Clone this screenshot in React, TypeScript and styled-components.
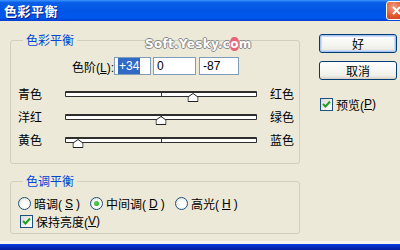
import styled, { createGlobalStyle } from "styled-components";

const GlobalStyle = createGlobalStyle`
  html, body {
    margin: 0;
    padding: 0;
  }
  body {
    width: 400px;
    height: 250px;
    overflow: hidden;
    background: #ece9d8;
    font-family: "Liberation Sans", "Noto Sans CJK SC", sans-serif;
    font-size: 12px;
    color: #000;
  }
`;

const Window = styled.div`
  position: relative;
  display: flex;
  flex-direction: column;
  width: 400px;
  height: 250px;
  background: #ece9d8;
`;

const TitleBar = styled.div`
  height: 21px;
  display: flex;
  align-items: center;
  justify-content: space-between;
  padding-left: 4px;
  overflow: hidden;
  background: linear-gradient(
    #3d95ff 0%,
    #0a5fe8 12%,
    #0055e5 50%,
    #0058ee 85%,
    #003dd0 100%
  );
`;

const Title = styled.span`
  color: #fff;
  font-family: "Noto Sans CJK SC", sans-serif;
  font-size: 13px;
  font-weight: 700;
  letter-spacing: 0.5px;
  text-shadow: 1px 1px #0a1883;
`;

const CloseBtn = styled.div`
  width: 21px;
  height: 19px;
  margin-right: -7px;
  box-sizing: border-box;
  border: 1px solid #fff;
  border-radius: 3px;
  background: radial-gradient(circle at 35% 30%, #f0a088 0%, #e0532c 55%, #c23a14 100%);
  display: flex;
  align-items: center;
  justify-content: center;
`;

const Body = styled.div`
  height: 220px;
  display: flex;
  padding: 11px 0 0 10px;
  box-sizing: border-box;
`;

const LeftCol = styled.div`
  width: 290px;
  display: flex;
  flex-direction: column;
  gap: 9px;
`;

const Group = styled.fieldset<{ $height: number }>`
  margin: 0;
  padding: 0;
  height: ${(p) => p.$height}px;
  box-sizing: border-box;
  border: 1px solid #d0d0bf;
  border-radius: 3px;
  min-width: 0;
`;

const Legend = styled.legend`
  margin-left: 12px;
  padding: 0 3px;
  height: 16px;
  line-height: 16px;
  color: #0046d5;
  font-family: "Noto Sans CJK SC", sans-serif;
  font-size: 12px;
`;

const LevelRow = styled.div`
  display: flex;
  align-items: center;
  height: 18px;
  margin-top: 9px;
`;

const LevelLabel = styled.span`
  width: 103px;
  text-align: right;
  white-space: nowrap;
`;

const Key = styled.span`
  text-decoration: underline;
`;

const NumBox = styled.div<{ $w: number; $gap: number }>`
  width: ${(p) => p.$w}px;
  height: 18px;
  margin-left: ${(p) => p.$gap}px;
  box-sizing: border-box;
  border: 1px solid #7f9db9;
  background: #fff;
  padding-left: 3px;
  line-height: 16px;
  font-size: 12px;
`;

const Selected = styled.span`
  background: #316ac5;
  color: #fff;
  padding: 1px 1px;
`;

const Sliders = styled.div`
  margin-top: 7px;
  display: flex;
  flex-direction: column;
`;

const SliderRow = styled.div`
  display: grid;
  grid-template-columns: 34px 192px auto;
  column-gap: 13px;
  align-items: center;
  height: 23px;
  padding-left: 7px;
  white-space: nowrap;
`;

const Track = styled.div`
  position: relative;
  height: 6px;
  box-sizing: border-box;
  border: 1px solid #2e2e2e;
  border-top-width: 2px;
  border-radius: 1px;
  background: #fff;
  &::after {
    content: "";
    position: absolute;
    left: 95px;
    top: 0;
    width: 1px;
    height: 100%;
    background: #2e2e2e;
  }
`;

const Thumb = styled.svg`
  position: absolute;
  top: 0;
  transform: translateX(-50%);
  z-index: 1;
`;

const RadioRow = styled.div`
  display: grid;
  grid-template-columns: 72px 85px auto;
  align-items: center;
  height: 16px;
  margin-top: 6px;
  padding-left: 7px;
`;

const Option = styled.label`
  display: flex;
  align-items: center;
  gap: 3px;
  white-space: nowrap;
`;

const Radio = styled.span<{ $on?: boolean }>`
  width: 13px;
  height: 13px;
  box-sizing: border-box;
  border-radius: 50%;
  border: 1px solid #1c5180;
  background: radial-gradient(circle at 60% 60%, #fff 30%, #d9d8cf 100%);
  display: flex;
  align-items: center;
  justify-content: center;
  &::after {
    content: "";
    display: ${(p) => (p.$on ? "block" : "none")};
    width: 5px;
    height: 5px;
    border-radius: 50%;
    background: radial-gradient(circle at 40% 40%, #5ad75a, #1a9a1a);
  }
`;

const CheckRow = styled.div<{ $pad: number; $top: number }>`
  display: flex;
  align-items: center;
  height: 16px;
  margin-top: ${(p) => p.$top}px;
  padding-left: ${(p) => p.$pad}px;
`;

const Box = styled.span`
  width: 13px;
  height: 13px;
  margin-right: 3px;
  box-sizing: border-box;
  border: 1px solid #1c5180;
  background: linear-gradient(135deg, #dcdbd5, #fff);
  display: flex;
  align-items: center;
  justify-content: center;
`;

const RightCol = styled.div`
  margin-left: 19px;
  padding-top: 1px;
  display: flex;
  flex-direction: column;
`;

const Button = styled.div<{ $default?: boolean; $top: number }>`
  width: 78px;
  height: 19px;
  margin-top: ${(p) => p.$top}px;
  box-sizing: border-box;
  border: 1px solid #003c74;
  border-radius: 3px;
  background: linear-gradient(#ffffff, #f0f0ea 80%, #d6d0c5);
  box-shadow: ${(p) =>
    p.$default ? "inset 0 0 0 1px #a8c4f5, inset 0 0 0 2px #cddcf9" : "none"};
  display: flex;
  align-items: center;
  justify-content: center;
  font-family: "Noto Sans CJK SC", sans-serif;
  font-size: 12px;
`;

const Watermark = styled.div`
  position: absolute;
  left: 145px;
  top: 37px;
  font-family: "DejaVu Sans", sans-serif;
  font-weight: 700;
  font-size: 12px;
  letter-spacing: 0.3px;
  color: #fff;
  text-shadow: 1px 0 #8a8a8a, -1px 0 #8a8a8a, 0 1px #8a8a8a, 0 -1px #8a8a8a;
`;

const RedO = styled.span`
  display: inline-block;
  background: #e8657a;
  border-radius: 40%;
  text-shadow: none;
`;

const BottomFrame = styled.div`
  height: 6px;
  border-top: 3px solid #f5f4ef;
  background: linear-gradient(#0a3ee0, #001a9a);
`;

const Check = () => (
  <Box>
    <svg width="9" height="8" viewBox="0 0 9 8">
      <path d="M1 4 L3.5 6.5 L8 1.5" fill="none" stroke="#21a121" strokeWidth="2" />
    </svg>
  </Box>
);

const sliders = [
  { left: "青色", right: "红色", value: 34 },
  { left: "洋红", right: "绿色", value: 0 },
  { left: "黄色", right: "蓝色", value: -87 },
];

export default function App() {
  return (
    <Window>
      <GlobalStyle />
      <TitleBar>
        <Title>色彩平衡</Title>
        <CloseBtn>
          <svg width="11" height="11" viewBox="0 0 11 11">
            <path d="M2 2 L9 9 M9 2 L2 9" stroke="#fff" strokeWidth="2" />
          </svg>
        </CloseBtn>
      </TitleBar>
      <Body>
        <LeftCol>
          <Group $height={132}>
            <Legend>色彩平衡</Legend>
            <LevelRow>
              <LevelLabel>
                色阶(<Key>L</Key>):
              </LevelLabel>
              <NumBox $w={37} $gap={0}>
                <Selected>+34</Selected>
              </NumBox>
              <NumBox $w={43} $gap={2}>0</NumBox>
              <NumBox $w={40} $gap={3}>-87</NumBox>
            </LevelRow>
            <Sliders>
              {sliders.map((s) => (
                <SliderRow key={s.left}>
                  <span>{s.left}</span>
                  <Track>
                    <Thumb
                      width="11"
                      height="9"
                      viewBox="0 0 11 9"
                      style={{ left: ((s.value + 100) / 200) * 190 }}
                    >
                      <polygon
                        points="5.5,0.5 10.5,4 10.5,8.5 0.5,8.5 0.5,4"
                        fill="#fff"
                        stroke="#222"
                      />
                    </Thumb>
                  </Track>
                  <span>{s.right}</span>
                </SliderRow>
              ))}
            </Sliders>
          </Group>
          <Group $height={61}>
            <Legend>色调平衡</Legend>
            <RadioRow>
              <Option>
                <Radio />
                暗调(<Key>S</Key>)
              </Option>
              <Option>
                <Radio $on />
                中间调(<Key>D</Key>)
              </Option>
              <Option>
                <Radio />
                高光(<Key>H</Key>)
              </Option>
            </RadioRow>
            <CheckRow $pad={9} $top={2}>
              <Check />
              保持亮度(<Key>V</Key>)
            </CheckRow>
          </Group>
        </LeftCol>
        <RightCol>
          <Button $default $top={1}>好</Button>
          <Button $top={8}>取消</Button>
          <CheckRow $pad={1} $top={16}>
            <Check />
            预览(<Key>P</Key>)
          </CheckRow>
        </RightCol>
      </Body>
      <BottomFrame />
      <Watermark>
        Soft.Yesky.c<RedO>o</RedO>m
      </Watermark>
    </Window>
  );
}
